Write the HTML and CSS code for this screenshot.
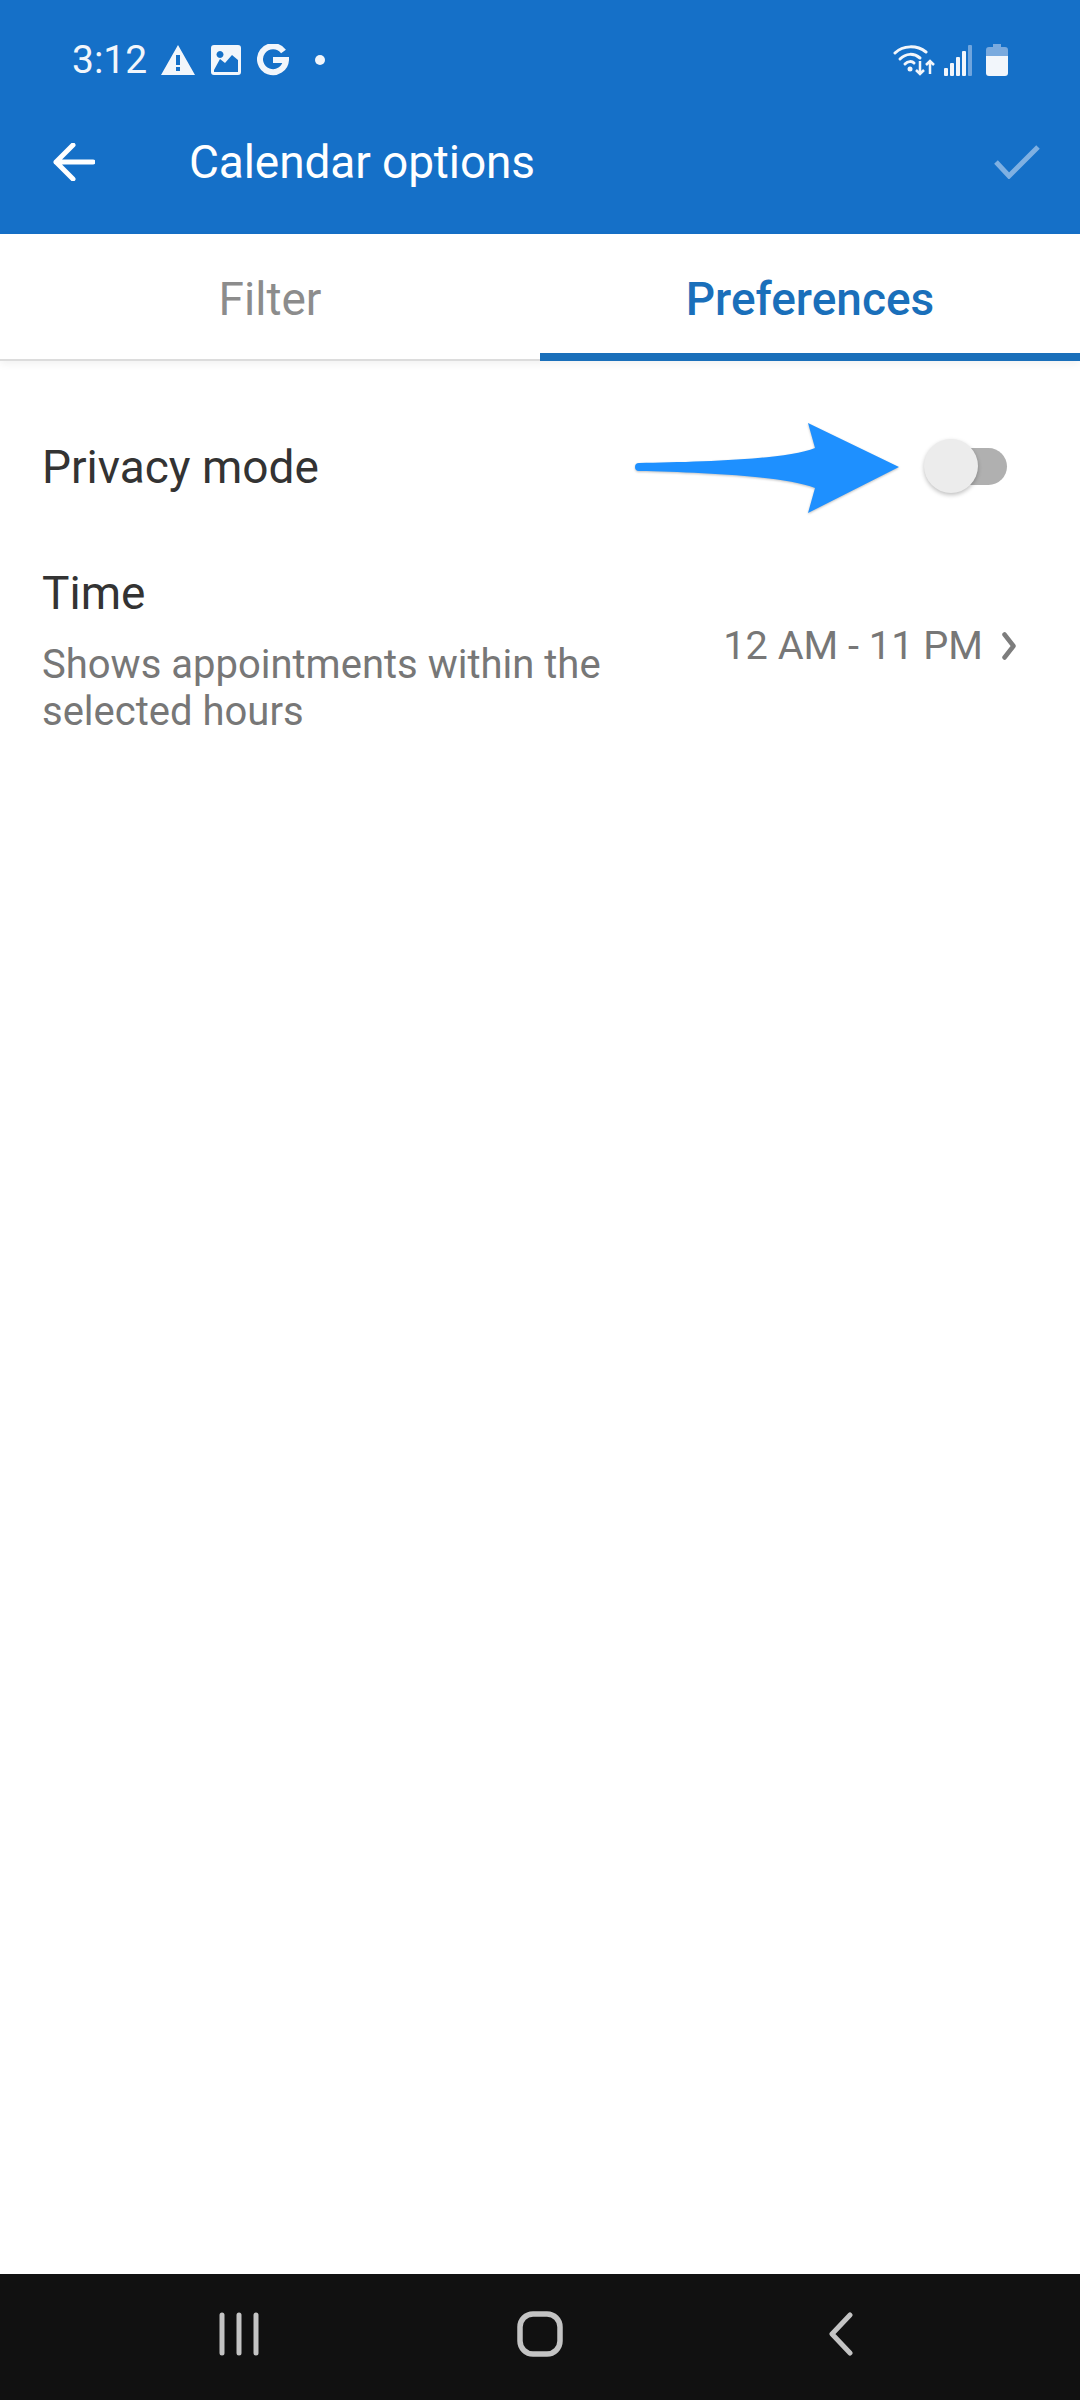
FILE: index.html
```html
<!DOCTYPE html>
<html lang="en">
<head>
    <meta charset="UTF-8">
    <meta name="viewport" content="width=device-width, initial-scale=1.0">
    <title>Calendar options</title>
    <link rel="stylesheet" href="styles.css">
</head>
<body>
    <div class="screen">
        <header class="app-header">
            <div class="status-bar">
                <span class="status-time">3:12</span>
                <svg class="icon-warning" viewBox="0 0 34 30"><path fill="#f2f6fb" fill-rule="evenodd" d="M17 0 L34 30 H0 Z M15 10 V20 H19 V10 Z M15 22 V26 H19 V22 Z"/></svg>
                <svg class="icon-image" viewBox="0 0 30 30"><path fill="#f2f6fb" fill-rule="evenodd" d="M3 0 H27 A3 3 0 0 1 30 3 V27 A3 3 0 0 1 27 30 H3 A3 3 0 0 1 0 27 V3 A3 3 0 0 1 3 0 Z M9 6 A3.5 3.5 0 1 0 9.01 6 Z M3 25 V27 H27 V15 L21 10 L14 18 L9 14 Z"/></svg>
                <svg class="icon-g" viewBox="0 0 32 32"><path fill="none" stroke="#f2f6fb" stroke-width="6" d="M26.500 7.500 A13 13 0 1 0 29 16 H16"/></svg>
                <span class="status-dot"></span>
                <span class="status-right">
                    <svg class="icon-wifi" viewBox="0 0 42 32">
                        <g fill="none" stroke="#f2f6fb" stroke-width="3" stroke-linecap="round">
                            <path d="M2 9 C10 1 24 1 33 8"/>
                            <path d="M7 15 C13 9 21 9 27 14"/>
                            <path d="M12 20 C15 17 19 17 21 19"/>
                        </g>
                        <circle cx="17" cy="25" r="2.500" fill="#f2f6fb"/>
                        <path d="M27 17 V30 M23 26 L27 30 L31 26 M37 30 V17 M33 21 L37 17 L41 21" fill="none" stroke="#f2f6fb" stroke-width="2.500"/>
                    </svg>
                    <svg class="icon-signal" viewBox="0 0 28 31">
                        <rect x="0" y="23" width="4" height="8" rx="1" fill="#f2f6fb"/>
                        <rect x="6" y="18" width="4" height="13" rx="1" fill="#f2f6fb"/>
                        <rect x="12" y="12" width="4" height="19" rx="1" fill="#f2f6fb"/>
                        <rect x="18" y="6" width="4" height="25" rx="1" fill="#f2f6fb"/>
                        <rect x="24" y="0" width="4" height="31" rx="1" fill="#6fa5de"/>
                    </svg>
                    <svg class="icon-battery" viewBox="0 0 22 32">
                        <path fill="#7aaade" d="M7 0 H15 V3 H19 A3 3 0 0 1 22 6 V12 H0 V6 A3 3 0 0 1 3 3 H7 Z"/>
                        <path fill="#f2f6fb" d="M0 12 H22 V29 A3 3 0 0 1 19 32 H3 A3 3 0 0 1 0 29 Z"/>
                    </svg>
                </span>
            </div>
            <div class="toolbar">
                <svg class="icon-back" viewBox="0 0 42 38"><path fill="none" stroke="#fff" stroke-width="5" stroke-linecap="round" stroke-linejoin="round" d="M40 19 H3 M20 2 L3 19 L20 36"/></svg>
                <h1 class="toolbar-title">Calendar options</h1>
                <svg class="icon-check" viewBox="0 0 46 34"><path fill="none" stroke="#7fb0e2" stroke-width="5" d="M2 17 L15 31 L44 2"/></svg>
            </div>
        </header>

        <nav class="tabs">
            <div class="tab">Filter</div>
            <div class="tab tab-active">Preferences</div>
        </nav>

        <main class="options">
            <div class="option-row privacy-row">
                <span class="option-title">Privacy mode</span>
                <span class="switch"><span class="switch-thumb"></span></span>
                <svg class="annotation-arrow" viewBox="0 0 266 92"><path fill="#1e90ff" d="M4 41 C60 40 150 38 180 26 L173 1 L264 45 L173 91 L180 66 C150 54 60 50 4 49 A4 4 0 0 1 4 41 Z"/></svg>
            </div>
            <div class="option-row time-row">
                <div class="time-text">
                    <div class="option-title">Time</div>
                    <div class="option-desc">Shows appointments within the selected hours</div>
                </div>
                <div class="time-value">
                    <span>12 AM - 11 PM</span>
                    <svg class="icon-chevron" viewBox="0 0 14 28"><path fill="none" stroke="#7d7d7d" stroke-width="4.500" stroke-linecap="round" stroke-linejoin="round" d="M2.500 2.500 L11.500 14 L2.500 25.500"/></svg>
                </div>
            </div>
        </main>

        <footer class="nav-bar">
            <svg class="nav-recents" viewBox="0 0 40 44">
                <g stroke="#c4c4c4" stroke-width="5" stroke-linecap="round">
                    <path d="M3 3 V41"/>
                    <path d="M20 3 V41"/>
                    <path d="M37 3 V41"/>
                </g>
            </svg>
            <svg class="nav-home" viewBox="0 0 46 46"><rect x="3" y="3" width="40" height="40" rx="13" fill="none" stroke="#c4c4c4" stroke-width="5.500"/></svg>
            <svg class="nav-back" viewBox="0 0 24 44"><path fill="none" stroke="#c4c4c4" stroke-width="5" stroke-linecap="round" stroke-linejoin="round" d="M21 3 L3 22 L21 41"/></svg>
        </footer>
    </div>
</body>
</html>
```

FILE: styles.css
```css
* {
    box-sizing: border-box;
}

body {
    margin: 0;
    padding: 0;
    background-color: #fff;
    font-family: Roboto, "Liberation Sans", sans-serif;
}

svg {
    display: block;
    flex-shrink: 0;
}

.screen {
    width: 1080px;
    height: 2400px;
    display: flex;
    flex-direction: column;
    overflow: hidden;
}

.app-header {
    background-color: #1570c8;
    height: 234px;
    color: #fff;
}

.status-bar {
    height: 118px;
    padding: 2px 72px 0 72px;
    display: flex;
    align-items: center;
}

.status-time {
    font-size: 39px;
    width: 89px;
    color: #f2f6fb;
}

.icon-warning {
    width: 34px;
    height: 30px;
    margin-right: 16px;
}

.icon-image {
    width: 30px;
    height: 30px;
    margin-right: 16px;
}

.icon-g {
    width: 32px;
    height: 32px;
    margin-right: 26px;
}

.status-dot {
    width: 10px;
    height: 10px;
    border-radius: 50%;
    background-color: #f2f6fb;
}

.status-right {
    margin-left: auto;
    display: flex;
    align-items: center;
}

.icon-wifi {
    width: 42px;
    height: 32px;
    margin-right: 9px;
}

.icon-signal {
    width: 28px;
    height: 31px;
    margin-right: 14px;
}

.icon-battery {
    width: 22px;
    height: 32px;
}

.toolbar {
    height: 88px;
    padding: 0 40px 0 53px;
    display: flex;
    align-items: center;
}

.icon-back {
    width: 42px;
    height: 38px;
}

.toolbar-title {
    margin: 0 0 0 94px;
    font-size: 46px;
    font-weight: 400;
    letter-spacing: -0.1px;
    flex: 1;
}

.icon-check {
    width: 46px;
    height: 34px;
}

.tabs {
    height: 127px;
    display: flex;
    border-bottom: 2px solid #dcdcdc;
    box-shadow: 0 3px 8px rgba(0, 0, 0, 0.06);
}

.tab {
    flex: 1;
    height: 127px;
    display: flex;
    align-items: center;
    justify-content: center;
    font-size: 46px;
    color: #8c8c8c;
    padding-top: 2px;
}

.tab-active {
    color: #1a6fba;
    font-weight: 500;
    border-bottom: 8px solid #1a6fba;
    padding-top: 10px;
}

.options {
    flex: 1;
    padding: 0 43px 0 42px;
}

.option-row {
    display: flex;
    align-items: center;
    justify-content: space-between;
    position: relative;
}

.privacy-row {
    height: 212px;
    padding-bottom: 2px;
}

.option-title {
    font-size: 46px;
    line-height: 50px;
    color: #333;
}

.privacy-row .option-title {
    margin-top: 2px;
}

.switch {
    width: 80px;
    height: 37px;
    margin-right: 30px;
    background-color: #b0b0b0;
    border-radius: 19px;
    position: relative;
    display: block;
}

.switch-thumb {
    position: absolute;
    left: -3px;
    top: -9px;
    width: 54px;
    height: 54px;
    border-radius: 50%;
    background-color: #ececec;
    box-shadow: 0 2px 4px rgba(0, 0, 0, 0.25);
}

.annotation-arrow {
    position: absolute;
    left: 593px;
    top: 61px;
    width: 266px;
    height: 92px;
    filter: drop-shadow(0 1px 1px rgba(0, 0, 0, 0.25));
}

.time-row {
    align-items: flex-start;
    margin-top: -5px;
}

.time-text {
    width: 600px;
}

.option-desc {
    margin-top: 23px;
    font-size: 40px;
    line-height: 47px;
    color: #777;
}

.time-value {
    display: flex;
    align-items: center;
    gap: 19px;
    margin-top: 54px;
    margin-right: 21px;
    font-size: 39.7px;
    line-height: 48px;
    color: #777;
}

.icon-chevron {
    width: 14px;
    height: 28px;
}

.nav-bar {
    height: 126px;
    background-color: #111;
    display: grid;
    grid-template-columns: 1fr 1fr 1fr;
    justify-items: center;
    align-items: center;
    padding: 0 88px 6px 88px;
}

.nav-recents {
    width: 40px;
    height: 44px;
}

.nav-home {
    width: 46px;
    height: 46px;
}

.nav-back {
    width: 24px;
    height: 44px;
}
```
